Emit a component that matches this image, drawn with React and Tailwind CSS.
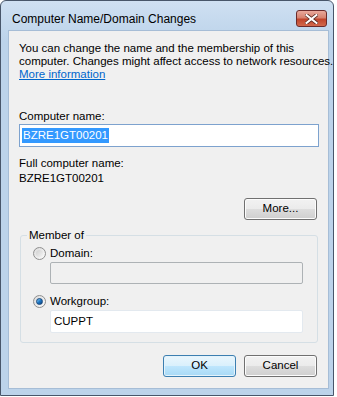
import React from "react";

const font = { fontFamily: '"Liberation Sans", Arial, sans-serif' };

const Radio = ({ checked }) => (
  <span className="relative flex h-[13px] w-[13px] shrink-0 items-center justify-center rounded-full border border-[#8f8f8f] bg-gradient-to-br from-[#dcdcdc] to-[#fafafa]">
    {checked ? (
      <span className="h-[7px] w-[7px] rounded-full border border-[#16467c] bg-gradient-to-br from-[#8ad1f5] via-[#1e79c7] to-[#0d3e78]" />
    ) : (
      <span className="h-[7px] w-[7px] rounded-full bg-gradient-to-br from-[#cfcfcf] to-[#f4f4f4]" />
    )}
  </span>
);

const Button = ({ children, primary, className = "" }) => (
  <div
    className={
      "flex h-[22px] w-[73px] items-center justify-center rounded-[3px] border text-[11.5px] text-black " +
      (primary
        ? "border-[#3c7fb1] bg-[linear-gradient(#eaf6fd_0%,#d9f0fc_50%,#bee6fd_51%,#a7d9f5_100%)] shadow-[inset_0_0_0_1px_#e4f3fb]"
        : "border-[#707070] bg-[linear-gradient(#f2f2f2_0%,#ebebeb_50%,#dddddd_51%,#cfcfcf_100%)] shadow-[inset_0_0_0_1px_#fcfcfc]") +
      " " +
      className
    }
  >
    {children}
  </div>
);

export default function App() {
  return (
    <div className="h-[397px] w-[337px] bg-white" style={font}>
      <div className="flex h-[396px] w-[334px] flex-col rounded-t-[6px] border border-[#48566a] bg-[linear-gradient(#cfe0f2_0px,#bcd3ea_40px,#bcd3ea_100%)]">
        {/* title bar */}
        <div className="flex h-[29px] items-start justify-between pl-[11px] pr-[6px]">
          <span className="mt-[10px] whitespace-nowrap text-[12px] leading-[16px] text-black">
            Computer Name/Domain Changes
          </span>
          <div className="mt-[9px] flex h-[17px] w-[31px] items-center justify-center rounded-[3px] border border-[#6b2b2b] bg-[linear-gradient(#e9a99c_0%,#d7826f_45%,#c0452c_55%,#d2694d_100%)]">
            <svg width="13" height="10" viewBox="0 0 13 10">
              <path
                d="M1.5 1 L11.5 9 M11.5 1 L1.5 9"
                stroke="#5a2a22"
                strokeWidth="3.6"
                strokeLinecap="square"
              />
              <path
                d="M1.5 1 L11.5 9 M11.5 1 L1.5 9"
                stroke="#ffffff"
                strokeWidth="2"
                strokeLinecap="square"
              />
            </svg>
          </div>
        </div>

        {/* client area */}
        <div className="ml-[7px] mr-[4px] flex h-[359px] flex-col border border-[#a6bdd6] bg-[#f0f0f0] px-[10px] text-[11.5px] text-black">
          <p className="mt-[11px] whitespace-nowrap leading-[13px]">
            You can change the name and the membership of this
            <br />
            computer. Changes might affect access to network resources.
            <br />
            <span className="text-[#0066cc] underline">More information</span>
          </p>

          <div className="mt-[28px] leading-[14px]">Computer name:</div>
          <div className="mt-[1px] flex h-[23px] w-[300px] items-center border border-[#7da2ce] bg-white px-[2px]">
            <span className="bg-[#3399ff] px-[1px] leading-[15px] text-white">BZRE1GT00201</span>
          </div>

          <div className="mt-[9px] leading-[14px]">Full computer name:</div>
          <div className="mt-[1px] leading-[14px]">BZRE1GT00201</div>

          <div className="mt-[13px] flex justify-end pr-[1px]">
            <Button>More...</Button>
          </div>

          {/* Member of group */}
          <div className="relative mt-[15px] ml-[1px] h-[108px] w-[298px] rounded-[3px] border border-[#d5dfe5] pl-[12px] pt-[10px]">
            <span className="absolute -top-[8px] left-[6px] bg-[#f0f0f0] px-[2px] leading-[14px]">
              Member of
            </span>
            <div className="flex items-center gap-[4px]">
              <Radio />
              <span className="leading-[14px]">Domain:</span>
            </div>
            <div className="ml-[17px] mt-[2px] h-[22px] w-[253px] rounded-[2px] border border-[#adb2b5] bg-[#f0f0f0]" />
            <div className="mt-[10px] flex items-center gap-[4px]">
              <Radio checked />
              <span className="leading-[14px]">Workgroup:</span>
            </div>
            <div className="ml-[17px] mt-[2px] flex h-[23px] w-[253px] items-center rounded-[2px] border border-[#e3e9ef] bg-white px-[3px]">
              CUPPT
            </div>
          </div>

          <div className="mt-[12px] flex justify-end gap-[8px] pr-[1px]">
            <Button primary>OK</Button>
            <Button>Cancel</Button>
          </div>
        </div>
      </div>
    </div>
  );
}
